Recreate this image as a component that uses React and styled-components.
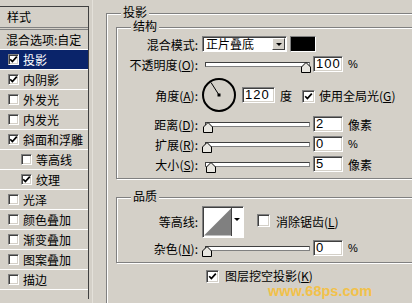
import React from "react"
import styled, { createGlobalStyle } from "styled-components"

const GlobalStyle = createGlobalStyle`
  html, body { margin: 0; padding: 0; background: #d4d0c8; }
  body {
    font-family: "Noto Sans CJK SC", "Liberation Sans", sans-serif;
    font-size: 12px;
    color: #000;
  }
`

const Dialog = styled.div`
  position: relative;
  display: flex;
  align-items: flex-start;
  width: 412px;
  height: 303px;
  overflow: hidden;
  background: #d4d0c8;
`

/* ---------- left style list ---------- */

const StyleList = styled.div`
  flex: none;
  width: 88px;
  height: 292px;
  margin-top: 6px;
  border-top: 1px solid #404040;
  border-right: 1px solid #404040;
`

const ListHeader = styled.div`
  height: 20px;
  line-height: 20px;
  padding-left: 7px;
  border-bottom: 3px double #808080;
`

const ListRow = styled.div`
  display: flex;
  align-items: center;
  gap: 4px;
  height: 19px;
  padding-left: ${p => p.$pad}px;
  border-bottom: 1px solid #fff;
  background: ${p => (p.$active ? "#0a246a" : "transparent")};
  color: ${p => (p.$active ? "#fff" : "#000")};
  white-space: nowrap;
`

const Splitter = styled.div`
  flex: none;
  width: 1px;
  height: 303px;
  margin-left: 3px;
  background: #e4e1da;
`

/* ---------- shared controls ---------- */

const Box = styled.span`
  flex: none;
  box-sizing: border-box;
  display: inline-flex;
  align-items: center;
  justify-content: center;
  width: ${p => p.$size}px;
  height: ${p => p.$size}px;
  background: #fff;
  border: 1px solid;
  border-color: #808080 #fff #fff #808080;
  box-shadow: inset 1px 1px 0 #404040, inset -1px -1px 0 #d4d0c8;
`

const CheckBox = ({ checked, size = 13 }) => (
  <Box $size={size}>
    {checked && (
      <svg width="9" height="9" viewBox="0 0 9 9">
        <path d="M1.2 4.2 L3.4 6.6 L7.8 1.6" fill="none" stroke="#000" strokeWidth="1.7" />
      </svg>
    )}
  </Box>
)

const Main = styled.div`
  flex: none;
  margin: 13px 0 0 13px;
`

const Group = styled.div`
  position: relative;
  flex: none;
  box-sizing: border-box;
  width: ${p => p.$w}px;
  height: ${p => p.$h}px;
  margin-top: ${p => p.$mt || 0}px;
  padding: ${p => p.$pad};
  border: 1px solid #808080;
  box-shadow: inset 1px 1px 0 #fff, 1px 1px 0 #fff;
`

const GroupTitle = styled.span`
  position: absolute;
  top: -7px;
  left: 14px;
  padding: 0 2px;
  font-family: "Liberation Sans", "Noto Sans CJK SC", sans-serif;
  line-height: 13px;
  background: #d4d0c8;
`

const FieldRow = styled.div`
  display: flex;
  align-items: center;
  height: ${p => p.$h}px;
  white-space: nowrap;
`

const KnockoutRow = styled(FieldRow)`
  margin-top: 6px;
  padding-left: 90px;
  line-height: 14px;
`

const FieldLabel = styled.span`
  flex: none;
  width: 81px;
  margin-right: 4px;
  text-align: right;
`

const NumInput = styled.div`
  flex: none;
  box-sizing: border-box;
  width: ${p => p.$w || 30}px;
  height: 16px;
  margin-left: ${p => p.$ml || 0}px;
  padding-left: 2px;
  background: #fff;
  border: 1px solid;
  border-color: #808080 #fff #fff #808080;
  box-shadow: inset 1px 1px 0 #404040, inset -1px -1px 0 #d4d0c8;
  font-family: "Liberation Sans", Arial, sans-serif;
  font-size: 13px;
  line-height: 14px;
  letter-spacing: 1px;
`

const Unit = styled.span`
  margin-left: ${p => p.$ml || 5}px;
  font-family: ${p => (p.$latin ? '"Liberation Sans", Arial, sans-serif' : "inherit")};
  font-size: ${p => (p.$latin ? 11 : 12)}px;
`

const Slider = styled.div`
  position: relative;
  flex: none;
  width: 108px;
  height: 14px;
  margin-top: 10px;
`

const Track = styled.div`
  box-sizing: border-box;
  height: 5px;
  margin-left: 3px;
  background: #fff;
  border: 1px solid;
  border-color: #404040 #808080 #808080 #404040;
`

const Thumb = styled.svg`
  position: absolute;
  top: 0;
  left: ${p => p.$pos}px;
`

const SliderField = ({ pos }) => (
  <Slider>
    <Track />
    <Thumb $pos={pos} width="10" height="11" viewBox="0 0 10 11">
      <polygon points="0.5,5 5,0.5 9.5,5 9.5,10.5 0.5,10.5" fill="#e8e6e0" stroke="#000" strokeWidth="1" />
    </Thumb>
  </Slider>
)

const Select = styled.div`
  flex: none;
  display: flex;
  align-items: center;
  box-sizing: border-box;
  width: 85px;
  height: 16px;
  padding: 1px;
  background: #fff;
  border: 1px solid;
  border-color: #808080 #fff #fff #808080;
  box-shadow: inset 1px 1px 0 #404040;
`

const SelectText = styled.span`
  flex: 1;
  padding-left: 2px;
  line-height: 12px;
`

const DropButton = styled.span`
  flex: none;
  box-sizing: border-box;
  display: flex;
  align-items: center;
  justify-content: center;
  width: 13px;
  height: 12px;
  background: #d4d0c8;
  border: 1px solid;
  border-color: #fff #404040 #404040 #fff;

  &::after {
    content: "";
    border-left: 3px solid transparent;
    border-right: 3px solid transparent;
    border-top: 3px solid #000;
  }
`

const Swatch = styled.span`
  flex: none;
  box-sizing: border-box;
  width: 26px;
  height: 16px;
  margin-left: 3px;
  background: #000;
  border: 1px solid;
  border-color: #808080 #fff #fff #808080;
`

const Dial = styled.svg`
  flex: none;
  margin-left: -1px;
`

const CheckLabel = styled.span`
  margin-left: ${p => p.$gap || 4}px;
`

const ContourBox = styled.div`
  flex: none;
  display: flex;
  box-sizing: border-box;
  width: 42px;
  height: 32px;
  padding: 1px;
  background: #fff;
  border: 1px solid;
  border-color: #808080 #fff #fff #808080;
  box-shadow: inset 1px 1px 0 #404040;
`

const ContourArrow = styled.span`
  flex: none;
  display: flex;
  align-items: flex-start;
  justify-content: center;
  width: 10px;
  padding-top: 10px;
  border-left: 1px solid #404040;

  &::after {
    content: "";
    border-left: 3px solid transparent;
    border-right: 3px solid transparent;
    border-top: 3px solid #000;
  }
`

const Watermark = styled.div`
  position: absolute;
  left: 268px;
  top: 284px;
  font-family: "Liberation Sans", Arial, sans-serif;
  font-weight: bold;
  font-size: 14.5px;
  line-height: 14px;
  color: #f8bf35;
  opacity: 0.85;
`

const styleItems = [
  { label: "投影", checked: true, active: true },
  { label: "内阴影", checked: true },
  { label: "外发光" },
  { label: "内发光" },
  { label: "斜面和浮雕", checked: true },
  { label: "等高线", indent: true },
  { label: "纹理", checked: true, indent: true },
  { label: "光泽" },
  { label: "颜色叠加" },
  { label: "渐变叠加" },
  { label: "图案叠加" },
  { label: "描边" },
]

const Key = ({ k }) => <>(<u>{k}</u>)</>

const App = () => (
  <>
    <GlobalStyle />
    <Dialog>
      <StyleList>
        <ListHeader>样式</ListHeader>
        <ListRow $pad={6}>混合选项:自定</ListRow>
        {styleItems.map(item => (
          <ListRow key={item.label} $pad={item.indent ? 21 : 8} $active={item.active}>
            <CheckBox size={11} checked={item.checked} />
            {item.label}
          </ListRow>
        ))}
      </StyleList>
      <Splitter />

      <Main>
        <Group $w={340} $h={320} $pad="13px 0 0 9px">
          <GroupTitle>投影</GroupTitle>

          <Group $w={320} $h={152} $pad="8px 0 0 0">
            <GroupTitle>结构</GroupTitle>

            <FieldRow $h={16}>
              <FieldLabel>混合模式:</FieldLabel>
              <Select>
                <SelectText>正片叠底</SelectText>
                <DropButton />
              </Select>
              <Swatch />
            </FieldRow>

            <FieldRow $h={24}>
              <FieldLabel>不透明度<Key k="O" />:</FieldLabel>
              <SliderField pos={99} />
              <NumInput $ml={3}>100</NumInput>
              <Unit $latin>%</Unit>
            </FieldRow>

            <FieldRow $h={38}>
              <FieldLabel>角度<Key k="A" />:</FieldLabel>
              <Dial width="36" height="36" viewBox="0 0 36 36">
                <circle cx="18" cy="18" r="16" fill="none" stroke="#000" strokeWidth="2" />
                <line x1="18" y1="18" x2="10" y2="5.5" stroke="#000" strokeWidth="1" />
                <rect x="16.5" y="16.5" width="3" height="3" fill="#000" />
              </Dial>
              <NumInput $ml={5} $w={33}>120</NumInput>
              <Unit>度</Unit>
              <Unit $ml={10}><CheckBox checked /></Unit>
              <CheckLabel>使用全局光<Key k="G" /></CheckLabel>
            </FieldRow>

            <FieldRow $h={20}>
              <FieldLabel>距离<Key k="D" />:</FieldLabel>
              <SliderField pos={1} />
              <NumInput $ml={3}>2</NumInput>
              <Unit>像素</Unit>
            </FieldRow>

            <FieldRow $h={20}>
              <FieldLabel>扩展<Key k="R" />:</FieldLabel>
              <SliderField pos={0} />
              <NumInput $ml={3}>0</NumInput>
              <Unit $latin>%</Unit>
            </FieldRow>

            <FieldRow $h={20}>
              <FieldLabel>大小<Key k="S" />:</FieldLabel>
              <SliderField pos={4} />
              <NumInput $ml={3}>5</NumInput>
              <Unit>像素</Unit>
            </FieldRow>
          </Group>

          <Group $w={320} $h={66} $mt={18} $pad="7px 0 0 0">
            <GroupTitle>品质</GroupTitle>

            <FieldRow $h={33}>
              <FieldLabel>等高线:</FieldLabel>
              <ContourBox>
                <svg width="28" height="28" viewBox="0 0 28 28">
                  <polygon points="0,28 28,0 28,28" fill="#808080" />
                </svg>
                <ContourArrow />
              </ContourBox>
              <Unit $ml={13}><CheckBox /></Unit>
              <CheckLabel $gap={6}>消除锯齿<Key k="L" /></CheckLabel>
            </FieldRow>

            <FieldRow $h={20}>
              <FieldLabel>杂色<Key k="N" />:</FieldLabel>
              <SliderField pos={0} />
              <NumInput $ml={3}>0</NumInput>
              <Unit $latin>%</Unit>
            </FieldRow>
          </Group>

          <KnockoutRow $h={14}>
            <CheckBox checked />
            <CheckLabel $gap={6}>图层挖空投影<Key k="K" /></CheckLabel>
          </KnockoutRow>
        </Group>
      </Main>

      <Watermark>www.68ps.com</Watermark>
    </Dialog>
  </>
)

export default App
